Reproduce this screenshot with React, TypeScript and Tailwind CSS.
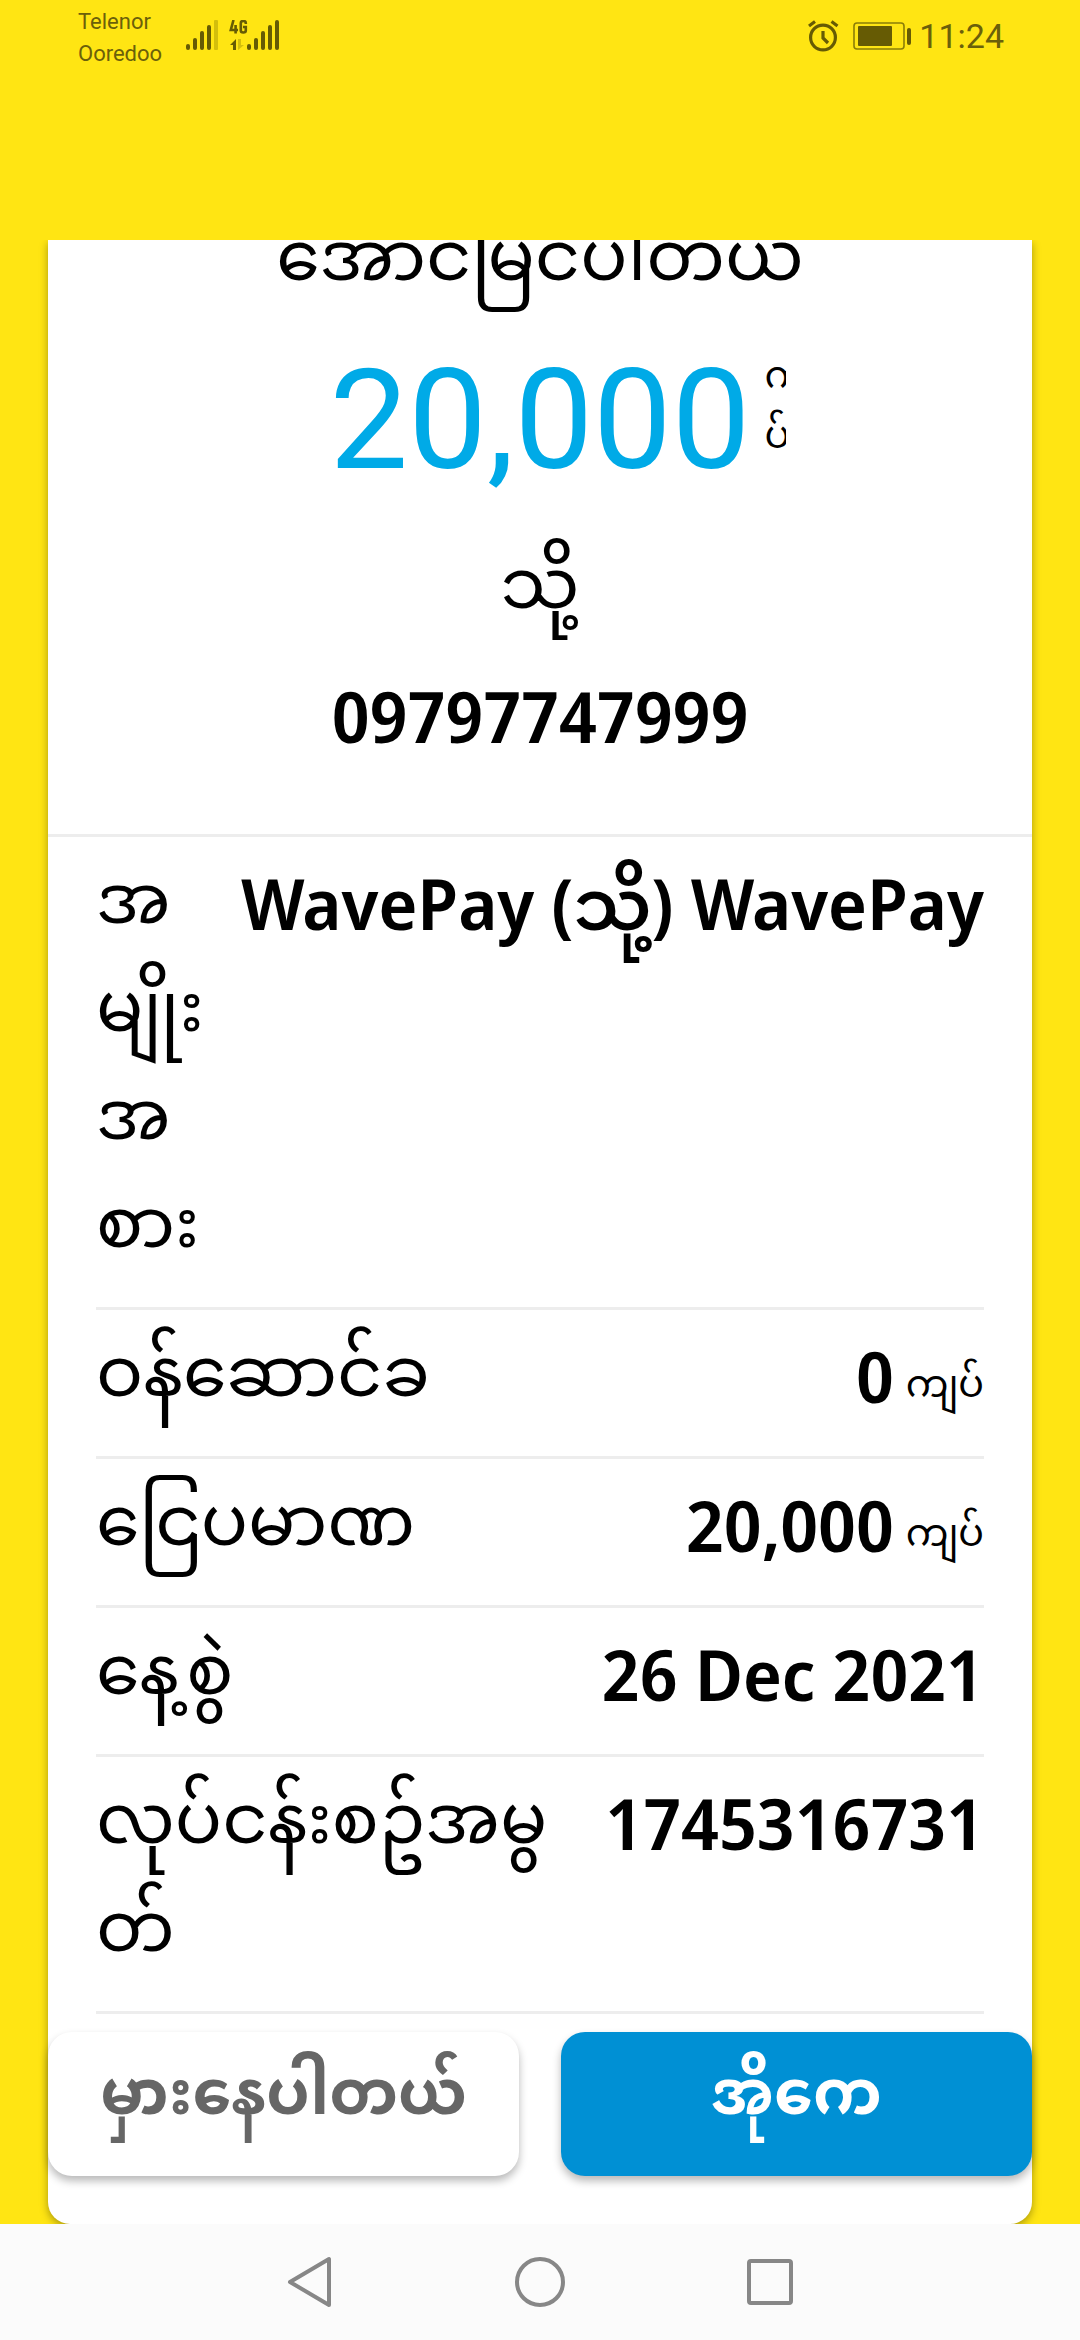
import { Fragment } from "react";
import type { ReactNode } from "react";

// Each part is an unbreakable group of Myanmar syllables; lines may wrap between parts.
function Syllables({ parts }: { parts: string[] }) {
  return (
    <>
      {parts.map((part, i) => (
        <Fragment key={i}>
          {i > 0 && <wbr />}
          <span className="whitespace-nowrap">{part}</span>
        </Fragment>
      ))}
    </>
  );
}

function Row({ label, unit, children }: { label: string[]; unit?: string; children: ReactNode }) {
  return (
    <div className="flex items-start justify-between gap-5 border-b-[3px] border-[#ededed] pt-3 pb-[22px]">
      <dt className="min-w-0 pt-1 text-[70px] leading-[108px]">
        <Syllables parts={label} />
      </dt>
      <dd className="flex-none whitespace-nowrap font-['Noto_Sans_Display','Noto_Sans_Myanmar','Noto_Sans',sans-serif] text-[70px] font-semibold leading-[108px]">
        {children}
        {unit && <span className="ml-3 align-[6px] font-['Noto_Sans_Myanmar'] text-[38px] font-normal leading-none">{unit}</span>}
      </dd>
    </div>
  );
}

function StatusBar() {
  return (
    <header className="flex items-start justify-between pt-1.5 pr-[76px] pl-[78px] font-['Roboto',sans-serif] text-[#6b600a]">
      <div className="flex items-start">
        <div className="w-[108px] text-[22px] leading-8">
          <p>Telenor</p>
          <p>Ooredoo</p>
        </div>
        <svg className="mt-3.5 h-8 w-24" viewBox="186 21 96 32" fill="#665b04" role="img" aria-label="Signal strength">
          <rect x="186" y="45" width="4" height="6" rx="2" />
          <rect x="193" y="39" width="4" height="12" rx="2" />
          <rect x="200" y="32" width="4" height="19" rx="2" />
          <rect x="207" y="26" width="4" height="25" rx="2" />
          <rect x="214" y="21" width="4" height="30" rx="1" fill="#d3be0c" />
          <g fill="none" stroke="#665b04" strokeWidth="2.6">
            <path d="M233.500 21 L230.800 31 H238 M235.600 26 V34.500" />
            <path d="M245.800 25 V24 Q245.800 22 243.300 22 Q240.800 22 240.800 24 V31.500 Q240.800 33.500 243.300 33.500 Q245.800 33.500 245.800 31.500 V28 H243" />
          </g>
          <path d="M236 40 V51 H233 V46 H230 Z" />
          <path d="M238 40 H241 V46 H244 L238 51 Z" fill="#d3be0c" />
          <rect x="247" y="45" width="4" height="6" rx="2" />
          <rect x="254" y="39" width="4" height="12" rx="2" />
          <rect x="261" y="32" width="4" height="19" rx="2" />
          <rect x="268" y="26" width="4" height="25" rx="2" />
          <rect x="275" y="21" width="4" height="30" rx="2" />
        </svg>
      </div>
      <div className="flex items-center gap-2 pt-2.5">
        <svg className="mr-1 h-8 w-8" viewBox="0 0 32 32" fill="none" stroke="#665b04" strokeWidth="3.200" role="img" aria-label="Alarm">
          <circle cx="16" cy="17.500" r="12.400" />
          <path d="M16 11 V18 L21 23 M2 6 L8 1.500 M24.500 1.500 L30.500 6" />
        </svg>
        <svg className="h-8 w-[60px]" viewBox="0 0 60 32" role="img" aria-label="Battery">
          <rect x="3" y="3" width="50" height="26" rx="3" fill="none" stroke="#8b7d08" strokeWidth="1.600" />
          <rect x="7" y="6" width="34" height="20" rx="1" fill="#665b04" />
          <rect x="56" y="8" width="4" height="17" rx="2" fill="#665b04" />
        </svg>
        <time className="text-[34px] leading-10">11:24</time>
      </div>
    </header>
  );
}

export default function App() {
  return (
    <div className="flex min-h-screen flex-col bg-[#ffe513] font-['Noto_Sans_Myanmar','Noto_Sans',sans-serif] text-black">
      <div className="min-h-60">
        <StatusBar />
      </div>

      <div className="flex flex-1 flex-col overflow-hidden px-12">
        <main className="flex flex-1 flex-col rounded-b-[22px] bg-white shadow-[0_3px_9px_rgba(0,0,0,0.35)]">
          {/* The receipt is scrolled slightly, so its title runs under the top edge of the card. */}
          <div className="overflow-hidden">
            <section className="-mt-[30px] border-b-[3px] border-[#ededed] pb-16 text-center">
              <h1 className="text-[70px] leading-[108px]">အောင်မြင်ပါတယ်</h1>
              <p className="mt-5 grid grid-cols-[1fr_auto_1fr] items-start">
                <span className="col-start-2 font-['Roboto',sans-serif] text-[140px] leading-[164px] text-[#00aae7]">20,000</span>
                <span className="mt-3 ml-3.5 w-[22px] overflow-hidden text-left text-[38px] leading-[60px]">
                  <Syllables parts={["ကျ", "ပ်"]} />
                </span>
              </p>
              <p className="mt-9 text-[70px] leading-[108px]">သို့</p>
              <p className="mt-4 font-['Noto_Sans_Display','Noto_Sans',sans-serif] text-[70px] font-semibold leading-[108px]">09797747999</p>
            </section>
          </div>

          <dl className="px-12">
            <Row label={["အ", "မျိုး", "အ", "စား"]}>WavePay (သို့) WavePay</Row>
            <Row label={["ဝန်ဆောင်ခ"]} unit="ကျပ်">0</Row>
            <Row label={["ငြေပမာဏ"]} unit="ကျပ်">20,000</Row>
            <Row label={["နေ့စွဲ"]}>26 Dec 2021</Row>
            <Row label={["လုပ်ငန်းစဥ်အမွ", "တ်"]}>1745316731</Row>
          </dl>

          <div className="mt-[18px] mb-12 grid grid-cols-2 gap-[42px] text-[62px] font-bold leading-[96px]">
            <button type="button" className="rounded-3xl bg-white pt-5 pb-7 text-[#666] shadow-[0_5px_8px_rgba(0,0,0,0.28)]">
              မှားနေပါတယ်
            </button>
            <button type="button" className="rounded-3xl bg-[#0090d4] pt-5 pb-7 text-white shadow-[0_5px_8px_rgba(0,0,0,0.28)]">
              အိုကေ
            </button>
          </div>
        </main>
      </div>

      <nav className="flex h-[116px] items-center justify-center gap-[178px] bg-[#fbfbfb]">
        <button type="button" aria-label="Back">
          <svg className="size-[52px]" viewBox="0 0 52 52" fill="none" stroke="#878787" strokeWidth="4" strokeLinejoin="round">
            <path d="M45 3 V49 L6 26 Z" />
          </svg>
        </button>
        <button type="button" aria-label="Home">
          <svg className="size-[52px]" viewBox="0 0 52 52" fill="none" stroke="#878787" strokeWidth="4">
            <circle cx="26" cy="26" r="23" />
          </svg>
        </button>
        <button type="button" aria-label="Recent apps">
          <svg className="size-[52px]" viewBox="0 0 52 52" fill="none" stroke="#878787" strokeWidth="4">
            <rect x="5" y="5" width="42" height="42" rx="2" />
          </svg>
        </button>
      </nav>
    </div>
  );
}
